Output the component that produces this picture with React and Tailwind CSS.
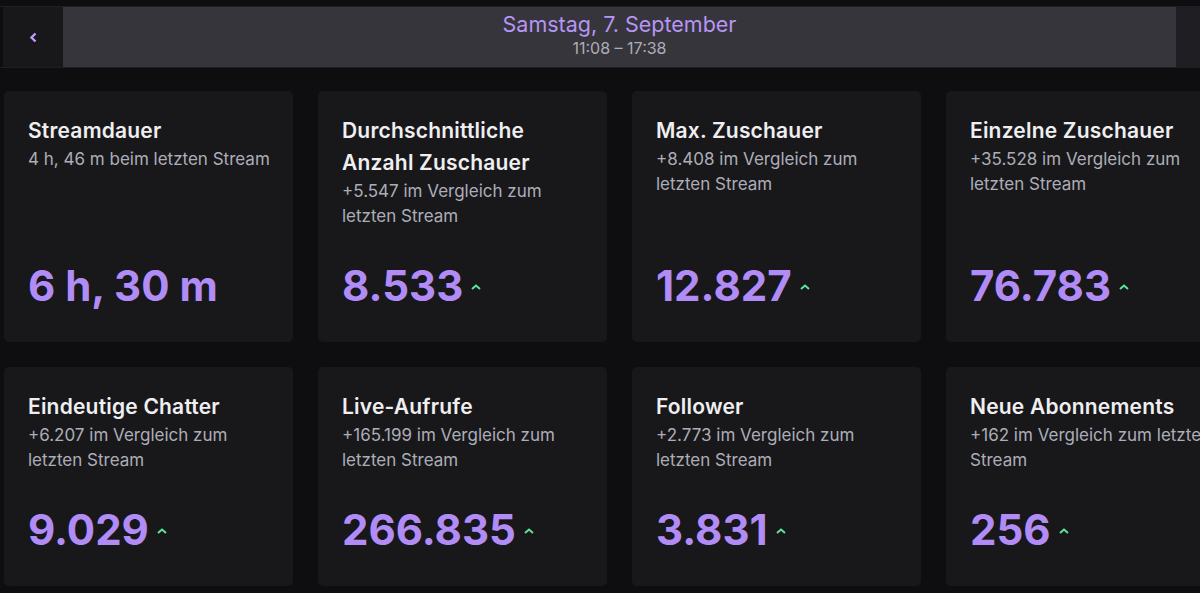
const stats = [
  { title: 'Streamdauer', sub: '4 h, 46 m beim letzten Stream', value: '6 h, 30 m', up: false },
  { title: 'Durchschnittliche Anzahl Zuschauer', sub: '+5.547 im Vergleich zum letzten Stream', value: '8.533', up: true },
  { title: 'Max. Zuschauer', sub: '+8.408 im Vergleich zum letzten Stream', value: '12.827', up: true },
  { title: 'Einzelne Zuschauer', sub: '+35.528 im Vergleich zum letzten Stream', value: '76.783', up: true },
  { title: 'Eindeutige Chatter', sub: '+6.207 im Vergleich zum letzten Stream', value: '9.029', up: true },
  { title: 'Live-Aufrufe', sub: '+165.199 im Vergleich zum letzten Stream', value: '266.835', up: true },
  { title: 'Follower', sub: '+2.773 im Vergleich zum letzten Stream', value: '3.831', up: true },
  { title: 'Neue Abonnements', sub: '+162 im Vergleich zum letzten Stream', value: '256', up: true },
];

const UpArrow = () => (
  <svg width="10" height="6" viewBox="0 0 10 6" className="ml-2 mt-[2px]">
    <path d="M1 5 L5 1.5 L9 5" fill="none" stroke="#5ce39f" strokeWidth="2" />
  </svg>
);

const StatCard = ({ stat }) => (
  <div className="bg-[#18181b] rounded-[5px] pt-6 pb-7 pl-6 pr-5 flex flex-col">
    <h2 className="text-[21px] leading-[32px] font-semibold text-[#efeff1] tracking-[0.2px] pr-4">{stat.title}</h2>
    <p className="text-[17px] leading-[25px] text-[#adadb8]">{stat.sub}</p>
    <div className="mt-auto pt-[29px] flex items-center">
      <span className="text-[42px] leading-[56px] font-bold text-[#b18cf6]">{stat.value}</span>
      {stat.up && <UpArrow />}
    </div>
  </div>
);

export default function App() {
  return (
    <div className="w-[1200px] h-[593px] overflow-hidden bg-[#0e0e10] font-['Inter','Noto_Sans',sans-serif]">
      <div className="pt-[6px]">
        <div className="h-[62px] flex border-t border-b border-[#1f1f23]">
          <button className="w-[60px] ml-[3px] bg-[#18181b] flex items-center justify-center">
            <svg width="9" height="11" viewBox="0 0 9 11">
              <path d="M6.5 1.5 L2.5 5.5 L6.5 9.5" fill="none" stroke="#bf9bff" strokeWidth="2.4" />
            </svg>
          </button>
          <div className="flex-1 bg-[#36353b] flex flex-col items-center pt-[4px]">
            <div className="text-[21.5px] leading-[26px] text-[#b795f5]">Samstag, 7. September</div>
            <div className="text-[16px] leading-[20px] text-[#adadb8] mt-[1px]">11:08 – 17:38</div>
          </div>
          <div className="w-[24px] bg-[#1f1f23]" />
        </div>
      </div>
      <div className="grid grid-cols-[289px_289px_289px_289px] gap-[25px] pl-[4px] pt-[23px]">
        {stats.map((s) => (
          <StatCard key={s.title} stat={s} />
        ))}
      </div>
    </div>
  );
}
